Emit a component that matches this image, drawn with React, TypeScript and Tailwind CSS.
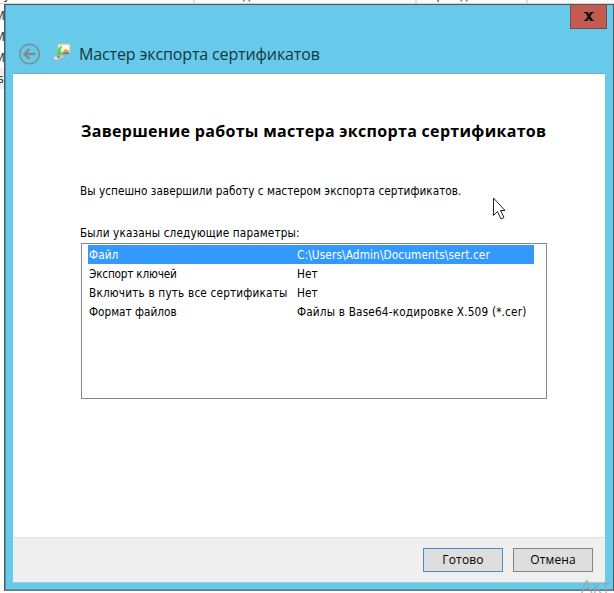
const rows = [
  { name: 'Файл', value: 'C:\\Users\\Admin\\Documents\\sert.cer', nameCls: 'tracking-[0.1px]', valueCls: 'tracking-[0.14px]' },
  { name: 'Экспорт ключей', value: 'Нет', nameCls: 'tracking-[-0.2px]', valueCls: '' },
  { name: 'Включить в путь все сертификаты', value: 'Нет', nameCls: 'tracking-[0.18px]', valueCls: '' },
  { name: 'Формат файлов', value: 'Файлы в Base64-кодировке X.509 (*.cer)', nameCls: '', valueCls: 'tracking-[0.18px]' },
];

function BackIcon() {
  return (
    <svg className="h-[22px] w-[22px] shrink-0" viewBox="0 0 22 22" fill="none" stroke="#7d8c92">
      <circle cx="10.500" cy="11" r="9.800" strokeWidth="1.4" />
      <path d="M16.500 11H6M10.300 6L5.500 11l4.800 5" strokeWidth="2.4" />
    </svg>
  );
}

function CertificateIcon() {
  return (
    <svg className="h-[18px] w-[18px] shrink-0" viewBox="0 0 18 18">
      <path d="M5 1h12v9H5z" fill="#f3eddd" stroke="#c9bd9c" />
      <path d="M6 2h10v5H6z" fill="#faf7ee" />
      <path d="M10.500 10.500v-3l2.500-1.500 3 2v2.500z" fill="#e5a52c" />
      <path d="M10 9.500h6v1.500h-6z" fill="#4f77b5" />
      <path d="M9 2.500C6.500 3.500 4.500 6 4.500 9H2.500l3.500 4 4-4H7.500C7.500 6.500 8.500 4.500 9 2.500z" fill="#52d054" stroke="#93e08a" strokeWidth=".5" />
      <ellipse cx="4" cy="15" rx="3.800" ry="2.200" fill="#e2e5e2" stroke="#8e9a9c" strokeWidth=".6" />
      <path d="M4 13l5-1.500 3 1.200-1 2-4.500 1.800z" fill="#c8cecd" stroke="#8a9697" strokeWidth=".6" />
      <path d="M4 14.500l3-1" stroke="#56666a" />
    </svg>
  );
}

function Backdrop() {
  return (
    <div className="absolute inset-0 overflow-hidden bg-white font-['Open_Sans',sans-serif] text-[12px] text-[#222]">
      <div className="relative h-[4px] overflow-hidden border-b border-[#d5d5d5] bg-[#fafafa]">
        <div className="absolute top-[-13px] left-[4px] flex h-[16px] leading-[16px] whitespace-nowrap">
          <span className="w-[191px] border-r-2 border-[#ddd]">у</span>
          <span className="w-[222px] border-r-2 border-[#ddd] pl-[6px]">Кем выдан</span>
          <span className="w-[111px] border-r-2 border-[#ddd] pl-[12px]">Срок дейст</span>
        </div>
      </div>
      <div className="ml-[-6px] flex w-[12px] flex-col overflow-hidden pt-[1px] leading-[21px]">
        <span className="h-[21px]">М</span>
        <span className="h-[21px]">М</span>
        <span className="h-[21px]">М</span>
        <span className="h-[21px] bg-[#eee] pl-[4px]">se</span>
      </div>
    </div>
  );
}

export default function App() {
  return (
    <div className="relative h-[593px] w-[614px] overflow-hidden">
      <Backdrop />
      <div className="absolute top-[4px] left-[4px] flex h-[587px] w-[610px] flex-col border border-[#4f575b] border-b-[#777] bg-[#67caea] pr-[8px] pb-[7px] pl-[8px] shadow-[inset_1px_-1px_0_#4799b7]">
        <header className="flex h-[69px] flex-col border-b border-[#75a9ca]">
          <div className="flex h-[24px] shrink-0 justify-end">
            <button className="mr-[-2px] flex h-[24px] w-[37px] items-center justify-center border border-t-0 border-[#754b50] bg-[#c35b50]" aria-label="Закрыть">
              <svg className="h-[9px] w-[10px]" viewBox="0 0 11 10">
                <path d="M0 0h4l1.500 2.500L7 0h4v1H9.500L7 4.800 9.800 9H11v1H7L5.300 7.200 3.700 10H0V9h1.200l2.700-4L1.500 1H0z" fill="#111" />
              </svg>
            </button>
          </div>
          <div className="mt-[3px] flex h-[43px] shrink-0 items-center pl-[6px]">
            <BackIcon />
            <span className="mt-[-3px] ml-[12px] flex">
              <CertificateIcon />
            </span>
            <h1 className="ml-[8px] text-[16px] leading-[22px] tracking-[-0.13px] whitespace-nowrap text-[#173640] font-['Open_Sans',sans-serif]">
              Мастер экспорта сертификатов
            </h1>
          </div>
        </header>
        <main className="flex flex-1 flex-col bg-white pt-[45px] pl-[67px] text-black">
          <h2 className="ml-[1px] h-[24px] text-[16px] leading-[24px] font-bold tracking-[0.31px] whitespace-nowrap font-['Open_Sans',sans-serif]">
            Завершение работы мастера экспорта сертификатов
          </h2>
          <div className="text-[11.7px] leading-[14px] whitespace-nowrap font-['DejaVu_Sans_Condensed','DejaVu_Sans',sans-serif] [font-stretch:condensed]">
            <p className="mt-[41px] h-[14px] tracking-[0.03px]">Вы успешно завершили работу с мастером экспорта сертификатов.</p>
            <p className="mt-[28px] h-[14px] tracking-[0.13px]">Были указаны следующие параметры:</p>
            <div className="mt-[3px] ml-[1px] h-[156px] w-[466px] border border-[#828790] pt-[1px] pl-[6px]">
              {rows.map((row, i) => (
                <div key={row.name} className={`flex h-[19px] w-[446px] items-center pl-[1px] ${i === 0 ? 'bg-[#3399ff] text-white' : ''}`}>
                  <span className={`w-[208px] ${row.nameCls}`}>{row.name}</span>
                  <span className={row.valueCls}>{row.value}</span>
                </div>
              ))}
            </div>
          </div>
        </main>
        <footer className="flex h-[46px] gap-[10px] border-t border-b border-t-[#dfdfdf] border-b-[#a5c8d3] bg-[#efefef] pt-[10px] pl-[410px] text-[12px] text-black font-['Open_Sans',sans-serif]">
          <button className="flex h-[24px] w-[80px] items-center justify-center border border-[#4a8cc3] bg-[#dedede] tracking-[0.15px]">Готово</button>
          <button className="flex h-[24px] w-[80px] items-center justify-center border border-[#838383] bg-[#dedede] tracking-[0.15px]">Отмена</button>
        </footer>
      </div>
      <svg className="absolute top-[197px] left-[492px] h-[25px] w-[15px]" viewBox="0 0 15 25">
        <path d="M1.500 1v17.500l4-4 3.500 7.500 3-1.500-3.500-7h4.500z" fill="white" stroke="#222" strokeWidth="1" />
      </svg>
      <span className="absolute top-[573px] left-[581px] text-[18px] leading-[26px] whitespace-nowrap text-[#9aa4a9]/80 font-['Open_Sans',sans-serif]">Акт</span>
    </div>
  );
}
